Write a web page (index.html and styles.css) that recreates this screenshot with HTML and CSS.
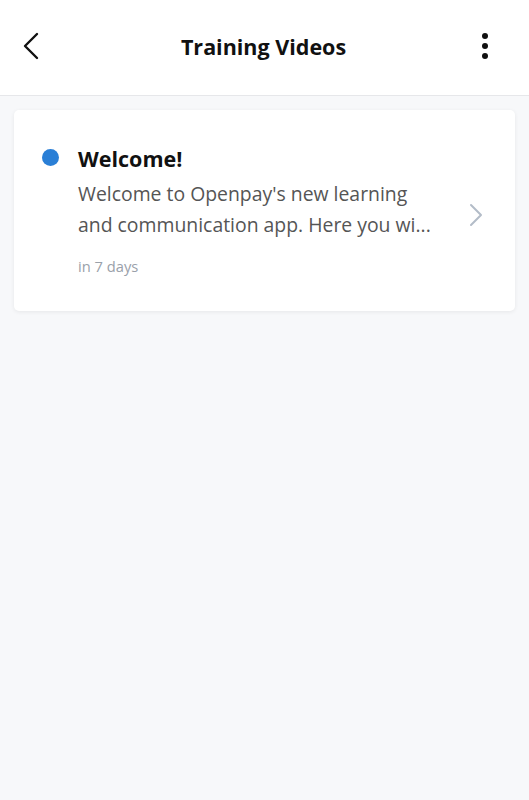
FILE: index.html
```html
<!DOCTYPE html>
<html>
<head>
<meta charset="utf-8">
<link rel="stylesheet" href="styles.css">
</head>
<body>
<header class="topbar">
  <button class="icon-btn back" aria-label="Back">
    <svg width="18" height="28" viewBox="0 0 18 28"><path d="M15 2 L3 14 L15 26" fill="none" stroke="#111" stroke-width="2.4" stroke-linecap="round" stroke-linejoin="round"/></svg>
  </button>
  <h1 class="title">Training Videos</h1>
  <button class="icon-btn more" aria-label="More">
    <svg width="8" height="28" viewBox="0 0 8 28"><circle cx="4" cy="4" r="3"/><circle cx="4" cy="14" r="3"/><circle cx="4" cy="24" r="3"/></svg>
  </button>
</header>
<main class="content">
  <article class="card">
    <span class="dot"></span>
    <div class="card-body">
      <h2 class="card-title">Welcome!</h2>
      <p class="card-text">Welcome to Openpay's new learning and communication app. Here you wi...</p>
      <p class="card-meta">in 7 days</p>
    </div>
    <svg class="chev" width="14" height="24" viewBox="0 0 14 24"><path d="M2 2 L12 12 L2 22" fill="none" stroke="#b3bcc8" stroke-width="2" stroke-linecap="round" stroke-linejoin="round"/></svg>
  </article>
</main>
</body>
</html>
```
FILE: styles.css
```css
* { box-sizing: border-box; }
html, body { margin: 0; padding: 0; }
body {
  font-family: "Open Sans", "Noto Sans", sans-serif;
  background: #f7f8fa;
  min-height: 800px;
}
.topbar {
  height: 96px;
  background: #fff;
  border-bottom: 1px solid #e6e7ea;
  display: flex;
  align-items: center;
  justify-content: space-between;
  padding: 0 40px 0 22px;
}
.icon-btn {
  background: none;
  border: 0;
  padding: 0;
  display: flex;
  align-items: center;
}
.back { margin-top: -3px; }
.more { margin-top: -4px; }
.more svg { fill: #111; }
.title {
  margin: 0 0 2px 0;
  font-size: 21.5px;
  font-weight: 700;
  color: #111;
  position: relative;
  left: 3px;
}
.content {
  padding: 14px 14px;
}
.card {
  background: #fff;
  border-radius: 5px;
  box-shadow: 0 1px 4px rgba(0,0,0,0.07);
  height: 201px;
  display: flex;
  align-items: flex-start;
  padding: 38px 32px 0 28px;
}
.dot {
  flex: none;
  width: 17px;
  height: 17px;
  border-radius: 50%;
  background: #2a7fd6;
  margin-top: 1px;
}
.card-body {
  flex: 1;
  margin-left: 19px;
}
.card-title {
  margin: 0;
  font-size: 21.5px;
  font-weight: 700;
  color: #111;
  line-height: 22px;
}
.card-text {
  margin: 8px 0 0 0;
  font-size: 19.4px;
  line-height: 31px;
  color: #555;
  width: 365px;
}
.card-meta {
  margin: 16px 0 0 0;
  font-size: 14.7px;
  color: #9aa1aa;
}
.chev {
  flex: none;
  align-self: flex-start;
  margin-top: 55px;
}
```
